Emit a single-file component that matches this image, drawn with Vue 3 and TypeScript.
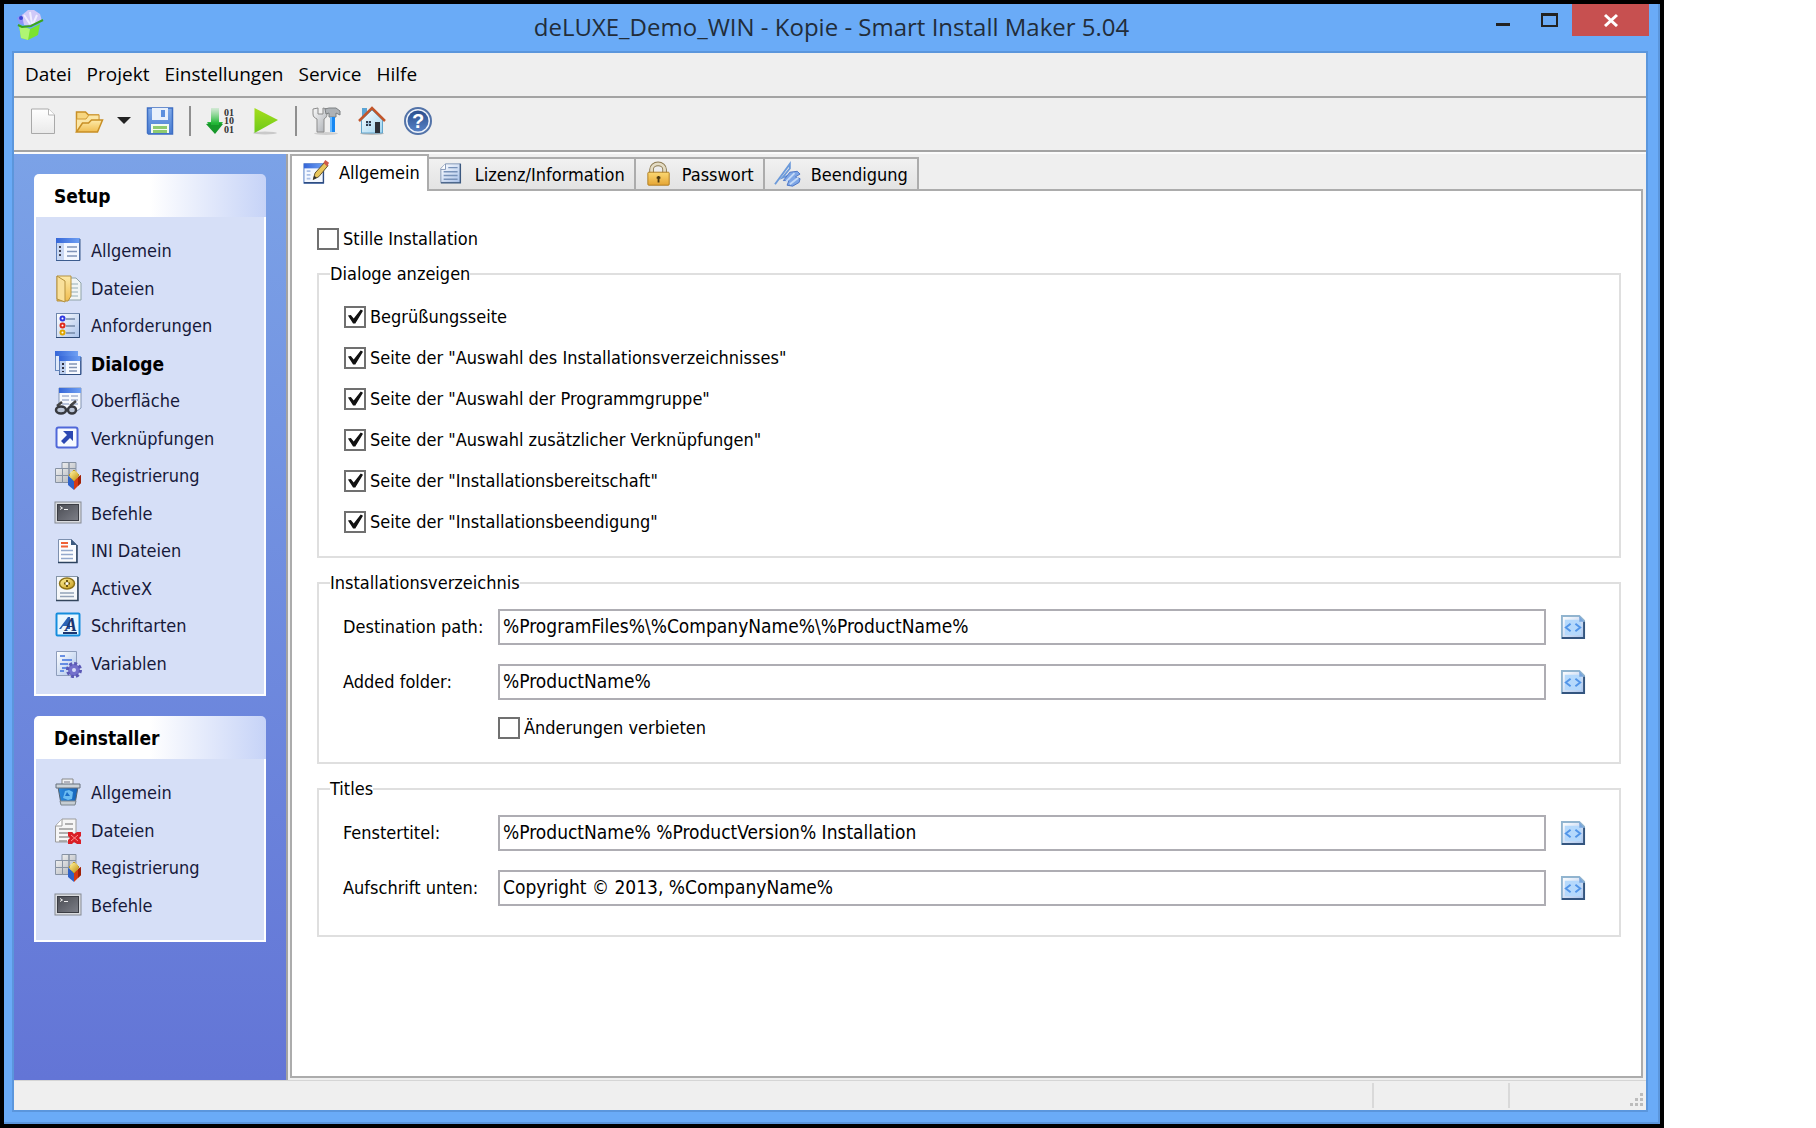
<script setup lang="ts">
import { ref } from 'vue'

interface NavItem { label: string; icon: string; active?: boolean }
interface NavGroup { title: string; items: NavItem[] }
interface Field { id: string; label: string; value: string }

const registry = `
<g stroke="#8792a3" fill="url(#silver)"><path d="M8 0.500h7v6H8zM15 0.500h7v6h-7zM1.500 6.500h7v7h-7zM8.500 6.500H15v7H8.500zM15 6.500h7v7h-7zM1.500 13.500h7v7h-7zM8.500 13.500H15v7H8.500z"/></g>
<path d="M14 14l6 4v10l-6-5z" fill="#2f62c8"/><path d="M20 18l7-5v8l-7 7z" fill="#d63a12"/><path d="M24 15l3-2v8l-3 3z" fill="#9f2208"/>
<path d="M20 8l5 5-5 6-5-6z" fill="url(#gold)" stroke="#c09a22"/><circle cx="20" cy="13" r="4" fill="url(#gold)"/>`
const terminal = `
<rect x="1" y="2" width="26" height="21" fill="#dadce0" stroke="#868b94"/><rect x="3.500" y="4.500" width="21" height="16" fill="url(#dark)" stroke="#3b3d44"/>
<path d="M6 6.500l2.500 1.500L6 9.500M10 9.500h4" stroke="#eee" fill="none"/>`

const icons: Record<string, string> = {
  app: `<path d="M3 15l11 4 10-5-2 11-10 5-7-2z" fill="#7be32f"/><path d="M3 15l11 4-2 11-7-2z" fill="#b0f573"/>
<path d="M1 8l6-4 8 11-11-1z" fill="#8f94f5"/><path d="M6 5l6-5h6l6 4 2 7-9 5-9-1z" fill="#d0c9f8"/><path d="M8 5l6 9M14 2l2 12M21 5l-4 9" stroke="#efedff" stroke-width="2"/><circle cx="5" cy="8" r="2" fill="#3b46d8"/>
<path d="M2 15l4 2 9-1 12-6" fill="none" stroke="#3aa41d" stroke-width="2"/>`,
  page: `<path d="M2.500 2h17l6 6v18.500h-23z" fill="url(#paper)" stroke="#a9a9a9"/><path d="M19.500 2v6h6" fill="#fff" stroke="#b5b5b5"/>`,
  open: `<path d="M1.500 25V5h9l3 3h10v5" fill="#f7d680" stroke="#c88f25" stroke-width="1.500"/><path d="M1.500 24.500V12H11l3-4h10v5" fill="#fbe6a6" stroke="#d19a35"/><path d="M1.500 25l6-9h6l3-3h11l-5 12z" fill="url(#folder)" stroke="#c88f25" stroke-width="1.500"/>`,
  save: `<path d="M1.500 1h25v26h-24l-1-1z" fill="url(#save)" stroke="#3f6fc4" stroke-width="1.500"/><path d="M6 1h16v12H6z" fill="#e8f0fb"/><path d="M15 3h4v7h-4z" fill="#5c8fde"/><path d="M5 17h18v9H5z" fill="#f4fbef"/><path d="M7 19h14v3H7zM7 23h14v3H7z" fill="#8fcb6e"/>`,
  build: `<path d="M5 1h8v14h4L9 26 1 15h4z" fill="url(#arrow)"/><path d="M0 17l9 10 8-10-4-1v2H5v-2z" fill="#17982a"/>
<g font-family="Liberation Serif, serif" font-weight="700" font-size="10" fill="#333"><text x="18" y="9">01</text><text x="18" y="17">10</text><text x="18" y="26">01</text></g>`,
  play: `<ellipse cx="13" cy="26" rx="12" ry="1.500" fill="#c9c9c9"/><path d="M2.500 1L26 13 2.500 26z" fill="url(#play)"/>`,
  tools: `<ellipse cx="14" cy="26.500" rx="12" ry="1.500" fill="#cfcfcf"/><path d="M1 2v5c0 3 2 4 4 5v13h7V12c2-1 3-3 3-5V2l-4-1v6H6V1z" fill="url(#silver)" stroke="#8b8b8b"/><path d="M13 2l4-1h7l4 3v4l-4-2v4h-7V6l-3 1z" fill="#aeb2b6" stroke="#7d8082"/><path d="M18 10h5v15h-5z" fill="#1687f2"/><path d="M18 10h2v15h-2z" fill="#67b9ff"/>`,
  home: `<ellipse cx="14" cy="26.500" rx="12" ry="1.500" fill="#b9b9b9"/><path d="M4 1h5v9H4z" fill="#5ba4d4"/><path d="M3.500 13L14 3l10.500 10v13h-21z" fill="url(#house)" stroke="#62a5cc"/><path d="M1 14L14 1l13 13" fill="none" stroke="#c2562b" stroke-width="2.500"/><path d="M17 15h5v11h-5z" fill="#2d3038"/><path d="M8 14h5v5H8z" fill="#333b4d"/><path d="M10.500 14v5M8 16.500h5" stroke="#9fc6df"/>`,
  help: `<circle cx="14" cy="14" r="13" fill="#eef3fb" stroke="#5373a8" stroke-width="2"/><circle cx="14" cy="14" r="10.500" fill="url(#help)"/><text x="14" y="21" text-anchor="middle" font-family="Liberation Sans, sans-serif" font-weight="700" font-size="20" fill="#fff">?</text>`,
  general: `<rect x="2.500" y="1.500" width="23" height="22" fill="#f4f8ff" stroke="#5e7fba"/><path d="M2 1h24v5H2z" fill="url(#bar)"/><path d="M3 6h7v17H3z" fill="#c9d8f3"/><path d="M2 23.500h24V2" fill="none" stroke="#3c5c8e"/><path d="M6 9v2m0 2v2m0 2v2" stroke="#445" stroke-width="2"/><path d="M13 10h10M13 14.500h10M13 19h10" stroke="#7f93b8" stroke-width="1.500"/>`,
  files: `<path d="M14 3h8l5 5v17H14z" fill="#f1f5f5" stroke="#8fa3a8"/><path d="M16 9h8M16 13h8M16 17h8M16 21h8" stroke="#96aeb5"/><path d="M3 1h14v20l-3 5H3z" fill="url(#folder)" stroke="#b5913e"/><path d="M3 1l8 5v21l-8-3z" fill="#f9e09b" stroke="#b5913e"/>`,
  requirements: `<rect x="2.500" y="1.500" width="23" height="24" fill="url(#bluepaper)" stroke="#6f87ad"/><path d="M2 25.500h23.500V2" fill="none" stroke="#2e4a75"/><g fill="#fff" stroke-width="2"><circle cx="8.500" cy="6.500" r="2" stroke="#3038e0"/><circle cx="8.500" cy="13.500" r="2" stroke="#e02a1a"/><circle cx="8.500" cy="20.500" r="2" stroke="#dfa500"/></g><path d="M12 7h9M12 14h9M12 21h9" stroke="#7388a8" stroke-width="1.500"/>`,
  dialogs: `<rect x="1.500" y="1.500" width="22" height="19" fill="#dfe9fa" stroke="#6587bd"/><path d="M1 1h23v5H1z" fill="url(#bar)"/><rect x="5.500" y="6.500" width="21" height="18" fill="#f8faff" stroke="#5c7bb0"/><path d="M5 6h22v5H5z" fill="url(#bar)"/><path d="M6 11h6v13H6z" fill="#bed0ef"/><path d="M5 24.500h22V7" fill="none" stroke="#2e4d80"/><path d="M9 13v2m0 2v2m0 2v1" stroke="#334" stroke-width="2"/><path d="M15 14h8M15 17.500h8M15 21h8" stroke="#8294b4" stroke-width="1.500"/>`,
  surface: `<path d="M5 1h22v20l-4 3H5z" fill="#f7f9fd" stroke="#8193b1"/><path d="M5 1h22v5H5z" fill="url(#bar)"/><path d="M8 9h7M17 9h7M8 13h7M17 13h7M8 17h7M17 17h7" stroke="#a5b3cf" stroke-width="1.500"/><path d="M3 19l5-4M16 19l6-5" stroke="#444" stroke-width="2.500"/><ellipse cx="7" cy="23" rx="5" ry="3.500" fill="#bac4d6" stroke="#37393f" stroke-width="2.500"/><ellipse cx="18" cy="23" rx="4" ry="3.500" fill="#bac4d6" stroke="#37393f" stroke-width="2.500"/>`,
  shortcuts: `<rect x="2.500" y="2.500" width="21" height="20" rx="2" fill="#f7faff" stroke="#5068d9" stroke-width="2"/><path d="M9 6h10v10l-3-3-6 6-3-3 6-6z" fill="#2c48b2"/>`,
  registry,
  terminal,
  ini: `<path d="M4.500 2.500h13l5 5v18h-18z" fill="#fbfcff" stroke="#7c8fae"/><path d="M4 25.500h19V8" fill="none" stroke="#2d435f" stroke-width="1.500"/><path d="M17 2v6h6z" fill="#3c5a80"/><path d="M7 6h7M7 9.500h7" stroke="#ef6036" stroke-width="2"/><path d="M7 13.500h12M7 17.500h12M7 21.500h12" stroke="#93a8cc" stroke-width="1.500"/>`,
  activex: `<rect x="2.500" y="1.500" width="21" height="24" fill="#f6f8fa" stroke="#8595a8"/><path d="M2 25.500h22V2" fill="none" stroke="#33455c" stroke-width="1.500"/><ellipse cx="13" cy="8.500" rx="7.500" ry="5.500" fill="url(#gold)" stroke="#8f7317" stroke-width="1.500"/><path d="M10 8.500h6M13 5v7" stroke="#6b540e" stroke-width="2"/><circle cx="13" cy="8.500" r="1.500" fill="#fff"/><path d="M6 18h14M6 21.500h14" stroke="#93a2b8" stroke-width="1.500"/>`,
  fonts: `<rect x="2.500" y="1.500" width="23" height="22" rx="1" fill="#e9f6ff" stroke="#158ddd" stroke-width="2"/><path d="M5 17l9-12h2v12h-3v-3H9l-2 3z" fill="#2a62b5"/><text x="11" y="19" font-family="Liberation Serif, serif" font-style="italic" font-weight="700" font-size="18" fill="#1c3672">A</text><path d="M9 21h14" stroke="#1c3672" stroke-width="2"/>`,
  variables: `<path d="M2.500 1.500h20v24h-20z" fill="url(#bluepaper)" stroke="#8e9dbb"/><path d="M6 6h5M8 10h10M6 14h8M8 18h5M6 21h4" stroke="#3f70dd" stroke-width="1.500"/><circle cx="20" cy="20" r="6" fill="#7470cc"/><circle cx="20" cy="20" r="6.500" fill="none" stroke="#5b58b5" stroke-width="3" stroke-dasharray="3 2"/><circle cx="20" cy="20" r="2" fill="#d8dcf8"/>`,
  bin: `<path d="M8 0h11v6H8z" fill="#f0f2f5" stroke="#888"/><path d="M10 3h6" stroke="#778"/><path d="M4 8h20l-3 17H7z" fill="url(#bin)" stroke="#586470"/><path d="M9 19l2-7 4-1 4 2-1 7-4 1z" fill="#6bbcf2"/><path d="M11 17l2-4 3 4z" fill="#1b6fc8"/><path d="M2 5h24v4H2z" fill="#cbd2d8" stroke="#66717d"/><path d="M6 22h16l-1 4H7z" fill="#c6cdd3" stroke="#7c868f"/>`,
  remove: `<path d="M8 2h14v23H1.500V9z" fill="#f6f6f6" stroke="#9b9b9b"/><path d="M8 2v7H2" fill="#fff" stroke="#9b9b9b"/><path d="M11 7h8M5 12h14M5 16h14M5 20h14M5 24h8" stroke="#999" stroke-width="1.500"/><path d="M14 15h4l2 2 3-2h4v4l-2 2 2 2v4h-4l-3-2-2 2h-4v-4l2-2-2-2z" fill="#d91f26"/><path d="M17 18l7 6m0-6l-7 6" stroke="#ff8d8d"/>`,
  edit: `<rect x="1" y="4" width="21" height="21" fill="#f4f8ff" stroke="#4a76c2"/><path d="M1 4h21v5H1z" fill="url(#bar)"/><path d="M1 24.500h21V10" fill="none" stroke="#2f4d80" stroke-width="1.500"/><path d="M4 12h4M4 16h4M4 20h4" stroke="#a9bfe6" stroke-width="2"/><path d="M11 21l2-7L23 3l4 3-10 12z" fill="#e9c65b" stroke="#5b4a22"/><path d="M22 3l2-3 4 3-2 4z" fill="#cf5a49"/><path d="M11 21l1-4 3 2z" fill="#333"/>`,
  document: `<path d="M7 2h16v20H2V7z" fill="url(#bluepaper)" stroke="#7e93b3"/><path d="M2 22.500h21V2" fill="none" stroke="#3b587f" stroke-width="1.500"/><path d="M7 2v6H2" fill="#fff" stroke="#7e93b3"/><path d="M10 6h10M5 10.500h15M5 14.500h15M5 18.500h15" stroke="#7892b9" stroke-width="1.500"/>`,
  lock: `<path d="M6 12V8a7 6 0 0 1 14 0v4" fill="none" stroke="#8c7a52" stroke-width="5"/><path d="M6 12V8a7 6 0 0 1 14 0v4" fill="none" stroke="#e4dcc4" stroke-width="3"/><rect x="2" y="11" width="23" height="14" rx="1" fill="url(#lock)" stroke="#ad7a1d"/><path d="M13.500 15v7m-2-5h4" stroke="#4c3810" stroke-width="2"/>`,
  finish: `<path d="M0 24L16 2v5L8 17l8-3" fill="none" stroke="#6c9ada" stroke-width="2"/><path d="M9 20l7-9 8-1 3 3-5 3 5 2-1 4-7 4-6-1 2-5z" fill="#7ea6e6" stroke="#4a72c4"/><path d="M12 21l9-9M16 24l9-7" stroke="#c4daf8" stroke-width="2"/>`,
  insert: `<path d="M2 2h18l5 5v18H2z" fill="url(#bluepaper)" stroke="#91b4cf" stroke-width="2"/><path d="M2 25h23V8" fill="none" stroke="#34557f" stroke-width="2"/><path d="M5 6h14l3 3v13H5z" fill="#b5d9fc"/><path d="M20 2v6h5z" fill="#77a5dd"/><path d="M11 10l-5 4 5 4M16 10l5 4-5 4" fill="none" stroke="#5295e8" stroke-width="2"/>`,
}

const menu = ['Datei', 'Projekt', 'Einstellungen', 'Service', 'Hilfe']

const groups: NavGroup[] = [
  {
    title: 'Setup',
    items: [
      { label: 'Allgemein', icon: 'general' },
      { label: 'Dateien', icon: 'files' },
      { label: 'Anforderungen', icon: 'requirements' },
      { label: 'Dialoge', icon: 'dialogs', active: true },
      { label: 'Oberfläche', icon: 'surface' },
      { label: 'Verknüpfungen', icon: 'shortcuts' },
      { label: 'Registrierung', icon: 'registry' },
      { label: 'Befehle', icon: 'terminal' },
      { label: 'INI Dateien', icon: 'ini' },
      { label: 'ActiveX', icon: 'activex' },
      { label: 'Schriftarten', icon: 'fonts' },
      { label: 'Variablen', icon: 'variables' },
    ],
  },
  {
    title: 'Deinstaller',
    items: [
      { label: 'Allgemein', icon: 'bin' },
      { label: 'Dateien', icon: 'remove' },
      { label: 'Registrierung', icon: 'registry' },
      { label: 'Befehle', icon: 'terminal' },
    ],
  },
]

const tabs = [
  { label: 'Allgemein', icon: 'edit' },
  { label: 'Lizenz/Information', icon: 'document' },
  { label: 'Passwort', icon: 'lock' },
  { label: 'Beendigung', icon: 'finish' },
]
const activeTab = ref(0)

const silent = ref(false)
const locked = ref(false)
const pages = ref([
  { label: 'Begrüßungsseite', on: true },
  { label: 'Seite der "Auswahl des Installationsverzeichnisses"', on: true },
  { label: 'Seite der "Auswahl der Programmgruppe"', on: true },
  { label: 'Seite der "Auswahl zusätzlicher Verknüpfungen"', on: true },
  { label: 'Seite der "Installationsbereitschaft"', on: true },
  { label: 'Seite der "Installationsbeendigung"', on: true },
])
const folders = ref<Field[]>([
  { id: 'destination', label: 'Destination path:', value: '%ProgramFiles%\\%CompanyName%\\%ProductName%' },
  { id: 'added', label: 'Added folder:', value: '%ProductName%' },
])
const titles = ref<Field[]>([
  { id: 'caption', label: 'Fenstertitel:', value: '%ProductName% %ProductVersion% Installation' },
  { id: 'footer', label: 'Aufschrift unten:', value: 'Copyright © 2013, %CompanyName%' },
])
</script>

<template>
  <div class="window">
    <svg class="defs" aria-hidden="true">
      <defs>
        <linearGradient id="silver" x2="1" y2="1"><stop stop-color="#fafafa" /><stop offset="1" stop-color="#a9adb3" /></linearGradient>
        <linearGradient id="gold" x2="1" y2="1"><stop stop-color="#fff3a0" /><stop offset="1" stop-color="#c79a16" /></linearGradient>
        <linearGradient id="dark" x2="1" y2="1"><stop stop-color="#4a4c53" /><stop offset="1" stop-color="#7d7f88" /></linearGradient>
        <linearGradient id="paper" x2="0" y2="1"><stop stop-color="#ffffff" /><stop offset="1" stop-color="#e9e9e9" /></linearGradient>
        <linearGradient id="bluepaper" x2="1" y2="1"><stop stop-color="#ffffff" /><stop offset="1" stop-color="#a9c2ea" /></linearGradient>
        <linearGradient id="folder" x2="0" y2="1"><stop stop-color="#fdeaa9" /><stop offset="1" stop-color="#f0bd50" /></linearGradient>
        <linearGradient id="save" x2="0" y2="1"><stop stop-color="#7fa9e8" /><stop offset="1" stop-color="#4a7dd3" /></linearGradient>
        <linearGradient id="arrow" x2="0" y2="1"><stop stop-color="#5fcf6a" stop-opacity="0.2" /><stop offset="0.6" stop-color="#24b838" /><stop offset="1" stop-color="#128a22" /></linearGradient>
        <linearGradient id="play" x2="0" y2="1"><stop stop-color="#a5de1c" /><stop offset="1" stop-color="#6cc91a" /></linearGradient>
        <linearGradient id="house" x2="1" y2="1"><stop stop-color="#ffffff" /><stop offset="1" stop-color="#9dd3f0" /></linearGradient>
        <linearGradient id="help" x2="0" y2="1"><stop stop-color="#2b4f8e" /><stop offset="1" stop-color="#5580c4" /></linearGradient>
        <linearGradient id="bar" x2="1" y2="0"><stop stop-color="#3566d8" /><stop offset="1" stop-color="#6fa0f3" /></linearGradient>
        <linearGradient id="bin" x2="1" y2="0"><stop stop-color="#2b8be0" /><stop offset="1" stop-color="#1462b8" /></linearGradient>
        <linearGradient id="lock" x2="0" y2="1"><stop stop-color="#fbd872" /><stop offset="1" stop-color="#e5a535" /></linearGradient>
      </defs>
    </svg>

    <header class="titlebar">
      <svg class="app-icon" viewBox="0 0 28 32" v-html="icons.app" />
      <h1>deLUXE_Demo_WIN - Kopie - Smart Install Maker 5.04</h1>
      <div class="controls">
        <button type="button" aria-label="Minimieren"><svg viewBox="0 0 18 14"><path d="M2 10h14v3H2z" fill="#222" /></svg></button>
        <button type="button" aria-label="Maximieren"><svg viewBox="0 0 18 14"><path d="M1 0h17v14H1zM3 3v9h13V3z" fill="#222" fill-rule="evenodd" /></svg></button>
        <button type="button" class="close" aria-label="Schließen"><svg viewBox="0 0 18 14"><path d="M3 2l12 11M15 2L3 13" stroke="#fff" stroke-width="3" /></svg></button>
      </div>
    </header>

    <div class="client">
      <nav class="menu">
        <button v-for="m in menu" :key="m" type="button">{{ m }}</button>
      </nav>

      <div class="toolbar">
        <button type="button" aria-label="Neu"><svg class="icon" viewBox="0 0 28 28" v-html="icons.page" /></button>
        <span class="split">
          <button type="button" aria-label="Öffnen"><svg class="icon" viewBox="0 0 28 28" v-html="icons.open" /></button>
          <button type="button" aria-label="Zuletzt verwendet"><svg class="caret" viewBox="0 0 14 8"><path d="M0 0h14L7 7z" fill="#222" /></svg></button>
        </span>
        <button type="button" aria-label="Speichern"><svg class="icon" viewBox="0 0 28 28" v-html="icons.save" /></button>
        <span class="rule"></span>
        <button type="button" aria-label="Kompilieren"><svg class="icon" viewBox="0 0 28 28" v-html="icons.build" /></button>
        <button type="button" aria-label="Ausführen"><svg class="icon" viewBox="0 0 28 28" v-html="icons.play" /></button>
        <span class="rule"></span>
        <button type="button" aria-label="Optionen"><svg class="icon" viewBox="0 0 28 28" v-html="icons.tools" /></button>
        <button type="button" aria-label="Webseite"><svg class="icon" viewBox="0 0 28 28" v-html="icons.home" /></button>
        <button type="button" aria-label="Hilfe"><svg class="icon" viewBox="0 0 28 28" v-html="icons.help" /></button>
      </div>

      <div class="body">
        <aside class="sidebar">
          <section v-for="g in groups" :key="g.title" class="group">
            <h2>{{ g.title }}</h2>
            <ul>
              <li v-for="item in g.items" :key="item.label">
                <a href="#" :class="{ active: item.active }">
                  <svg class="icon" viewBox="0 0 28 28" v-html="icons[item.icon]" />
                  <span>{{ item.label }}</span>
                </a>
              </li>
            </ul>
          </section>
        </aside>

        <main class="main">
          <div class="tabs" role="tablist">
            <button
              v-for="(t, i) in tabs"
              :key="t.label"
              type="button"
              role="tab"
              :aria-selected="i === activeTab"
              :class="{ selected: i === activeTab }"
              @click="activeTab = i"
            >
              <svg class="icon" viewBox="0 0 28 28" v-html="icons[t.icon]" />
              <span>{{ t.label }}</span>
            </button>
          </div>

          <form class="page" @submit.prevent>
            <label class="check"><input v-model="silent" type="checkbox" />Stille Installation</label>

            <fieldset class="dialogs">
              <legend>Dialoge anzeigen</legend>
              <label v-for="p in pages" :key="p.label" class="check"><input v-model="p.on" type="checkbox" />{{ p.label }}</label>
            </fieldset>

            <fieldset class="folders">
              <legend>Installationsverzeichnis</legend>
              <div v-for="f in folders" :key="f.id" class="field">
                <label :for="f.id">{{ f.label }}</label>
                <input :id="f.id" v-model="f.value" type="text" />
                <button type="button" aria-label="Variable einfügen"><svg viewBox="0 0 27 27" v-html="icons.insert" /></button>
              </div>
              <label class="check indented"><input v-model="locked" type="checkbox" />Änderungen verbieten</label>
            </fieldset>

            <fieldset class="titles">
              <legend>Titles</legend>
              <div v-for="f in titles" :key="f.id" class="field">
                <label :for="f.id">{{ f.label }}</label>
                <input :id="f.id" v-model="f.value" type="text" />
                <button type="button" aria-label="Variable einfügen"><svg viewBox="0 0 27 27" v-html="icons.insert" /></button>
              </div>
            </fieldset>
          </form>
        </main>
      </div>

      <footer class="status">
        <span class="cell wide"></span>
        <span class="cell"></span>
        <span class="cell last">
          <svg viewBox="0 0 16 16"><path d="M12 1h3v3h-3zM7 6h3v3H7zM12 6h3v3h-3zM2 11h3v3H2zM7 11h3v3H7zM12 11h3v3h-3z" fill="#bcbcbc" /></svg>
        </span>
      </footer>
    </div>
  </div>
</template>

<style>
body {
  background: #fff;
}
</style>

<style scoped>
* {
  box-sizing: border-box;
}
.window {
  display: flex;
  flex-direction: column;
  min-height: 100vh;
  margin-right: 152px;
  border: 4px solid #000;
  background: #6aabf7;
  box-shadow: inset -2px -2px #5b96dc;
  color: #000;
  font-family: "DejaVu Sans Condensed", "DejaVu Sans", sans-serif;
  font-size: 18px;
  line-height: 22px;
}
button {
  display: flex;
  align-items: center;
  padding: 0;
  border: 0;
  background: none;
  color: inherit;
  font: inherit;
}
.defs {
  position: absolute;
  width: 0;
  height: 0;
}
.icon {
  display: block;
  flex: none;
  width: 28px;
  height: 28px;
  overflow: visible;
}

.titlebar {
  display: grid;
  grid-template-columns: 168px 1fr 170px;
  height: 47px;
  padding: 0 11px 0 12px;
}
.app-icon {
  width: 28px;
  height: 32px;
  margin-top: 6px;
}
.titlebar h1 {
  margin: 0;
  color: #222d3a;
  font: 400 24px/46px "Open Sans", sans-serif;
  text-align: center;
  white-space: nowrap;
}
.controls {
  display: flex;
  justify-content: flex-end;
  align-items: flex-start;
}
.controls button {
  justify-content: center;
  width: 46px;
  height: 32px;
}
.controls .close {
  width: 77px;
  background: #c75050;
}
.controls svg {
  width: 18px;
  height: 14px;
}

.client {
  display: flex;
  flex: 1;
  flex-direction: column;
  margin: 0 12px 12px 8px;
  border: 2px solid #5b96dc;
  background: #efefef;
}
.menu {
  display: flex;
  gap: 15px;
  height: 45px;
  padding: 0 11px;
  border-bottom: 2px solid #a3a3a3;
  font: 19px/43px "Open Sans", sans-serif;
}
.toolbar {
  display: flex;
  align-items: center;
  gap: 18px;
  height: 56px;
  padding: 0 15px 8px;
  border-bottom: 2px solid #fbfbfb;
  box-shadow: inset 0 -2px #a3a3a3;
}
.split {
  display: flex;
  gap: 14px;
  margin-right: -3px;
}
.caret {
  width: 14px;
  height: 8px;
}
.rule {
  width: 2px;
  height: 30px;
  margin: 0 -3px;
  background: #8f8f8f;
}

.body {
  display: flex;
  flex: 1;
}
.sidebar {
  display: flex;
  flex: none;
  flex-direction: column;
  gap: 20px;
  width: 274px;
  padding: 20px;
  border-right: 2px solid #a3a3a3;
  background: linear-gradient(#7ba2e7, #6375d6);
}
.group h2 {
  height: 43px;
  margin: 0;
  padding-left: 20px;
  border-radius: 5px 5px 0 0;
  background: linear-gradient(90deg, #fff 50%, #c6d3f7);
  font-size: 19px;
  line-height: 44px;
}
.group ul {
  margin: 0;
  padding: 15px 0 12px 18px;
  border: 2px solid #fff;
  border-top: 0;
  background: #d6dff7;
  list-style: none;
}
.group:last-child ul {
  padding-bottom: 16px;
}
.group a {
  display: flex;
  align-items: center;
  gap: 9px;
  height: 38px;
  color: #17193a;
  text-decoration: none;
}
.group li:nth-child(even) a {
  height: 37px;
}
.group a.active {
  color: #000;
  font-size: 19px;
  font-weight: 700;
}

.main {
  display: flex;
  flex: 1;
  flex-direction: column;
  min-width: 0;
  padding: 0 3px 2px 2px;
}
.tabs {
  display: flex;
  align-items: flex-end;
  height: 35px;
}
.tabs button {
  gap: 10px;
  height: 32px;
  padding: 2px 9px 0 10px;
  border: 2px solid #acacac;
  border-bottom: 0;
  border-left-width: 0;
  background: linear-gradient(#f1f1f1, #e3e3e3);
}
.tabs .icon {
  width: 26px;
  height: 26px;
}
.tabs .selected {
  z-index: 1;
  height: 37px;
  margin-bottom: -2px;
  padding: 0 7px 2px 11px;
  border-left-width: 2px;
  background: #fff;
}
.page {
  flex: 1;
  padding: 36px 20px 34px 25px;
  border: 2px solid #acacac;
  background: #fff;
}
.check {
  display: flex;
  align-items: center;
  gap: 4px;
  height: 24px;
}
.check input {
  display: grid;
  place-items: center;
  flex: none;
  width: 22px;
  height: 22px;
  margin: 0;
  border: 2px solid #707070;
  background: #fff;
  appearance: none;
}
.check input:checked::before {
  width: 16px;
  height: 16px;
  background: #111;
  clip-path: polygon(6% 44%, 24% 40%, 42% 62%, 86% 6%, 100% 14%, 52% 94%, 38% 94%);
  content: "";
}
fieldset {
  min-width: 0;
  margin: 14px 0 0;
  border: 2px solid #dfdfdf;
}
legend {
  margin-left: -13px;
  padding: 0;
}
.dialogs {
  margin-top: 12px;
  padding: 11px 25px 14px;
}
.dialogs legend {
  margin-left: -14px;
}
.dialogs .check {
  height: 41px;
}
.folders {
  padding: 15px 33px 22px 24px;
}
.titles {
  padding: 15px 33px 29px 24px;
}
.field {
  display: flex;
  align-items: center;
  height: 36px;
}
.field + .field {
  margin-top: 19px;
}
.field label {
  flex: none;
  width: 155px;
}
.field input {
  flex: 1;
  min-width: 0;
  height: 36px;
  margin-right: 14px;
  padding: 0 3px 2px;
  border: 2px solid #aeadb3;
  background: #fff;
  color: inherit;
  font: inherit;
  font-size: 19px;
}
.field svg {
  width: 26px;
  height: 26px;
}
.indented {
  margin: 16px 0 0 155px;
}

.status {
  display: flex;
  height: 30px;
  padding: 2px 0;
  border-top: 1px solid #d5d5d5;
}
.cell {
  width: 136px;
  border-right: 2px solid #d9d9d9;
}
.wide {
  flex: 1;
}
.last {
  display: flex;
  align-items: flex-end;
  justify-content: flex-end;
  border: 0;
}
.last svg {
  width: 16px;
  height: 16px;
  margin: 0 2px 0 0;
}
</style>
